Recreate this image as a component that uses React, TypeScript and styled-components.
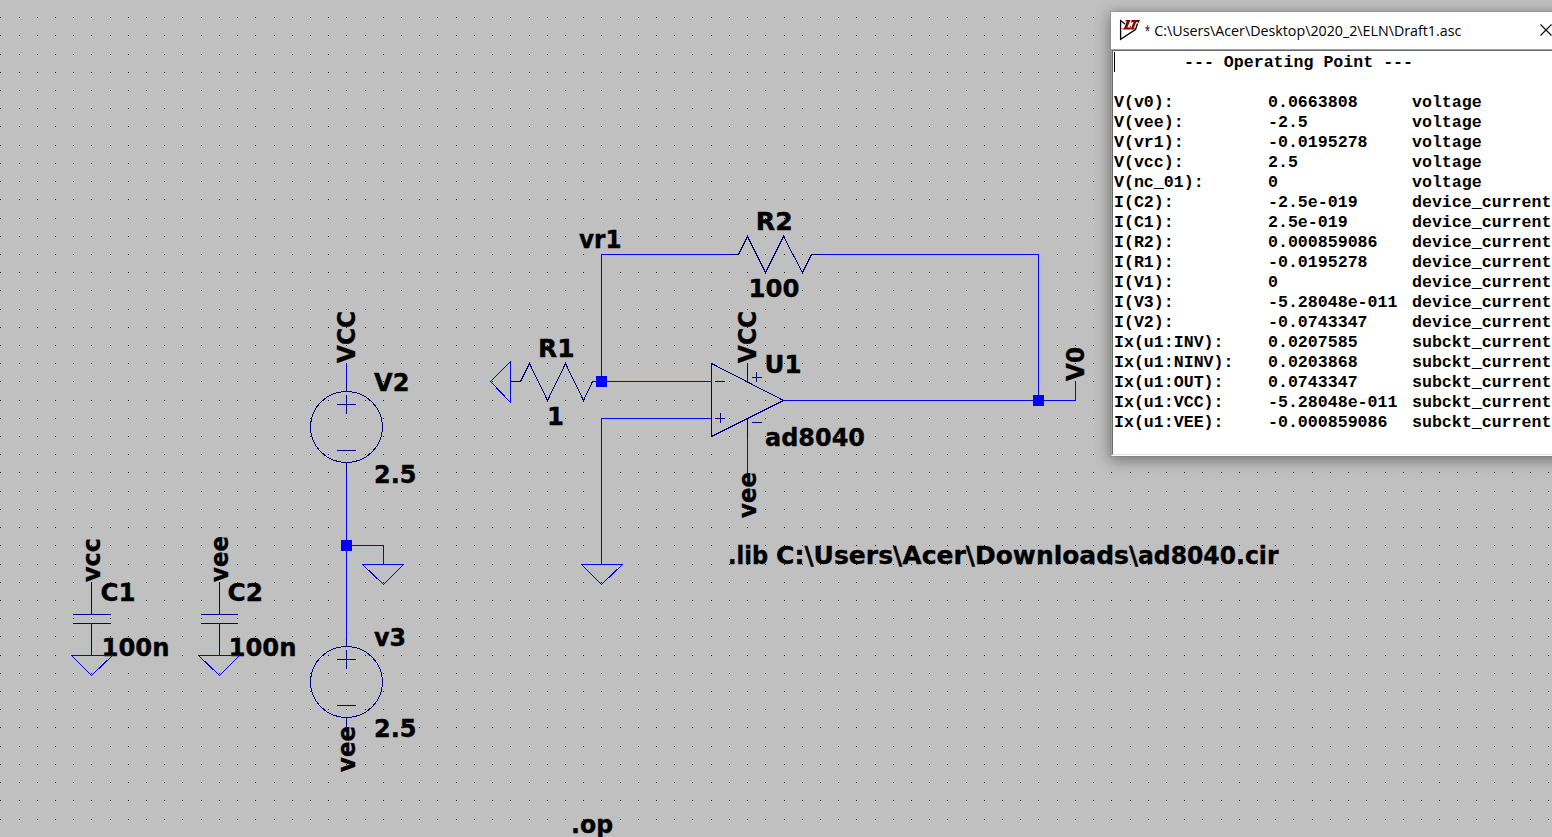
import React from "react";
import styled, { createGlobalStyle } from "styled-components";

const GlobalStyle = createGlobalStyle`
  html, body { margin: 0; padding: 0; overflow: hidden; background: #c0c0c0; }
`;

const Workspace = styled.main`
  position: relative;
  width: 1552px;
  height: 837px;
  overflow: hidden;
  background: #c0c0c0;
`;

const Sheet = styled.svg`
  display: block;
  width: 1552px;
  height: 837px;
`;

const Stroke = styled.path<{ $tone: "wire" | "symbol" }>`
  fill: none;
  stroke: ${(p) => (p.$tone === "wire" ? "#0000ff" : "#000080")};
  stroke-width: 1;
  shape-rendering: crispEdges;
`;

const Ring = styled.ellipse`
  fill: none;
  stroke: #000080;
  stroke-width: 1;
  shape-rendering: crispEdges;
`;

const Junction = styled.rect`
  fill: #0000ff;
  shape-rendering: crispEdges;
`;

const Dots = styled.path`
  fill: #000;
  shape-rendering: crispEdges;
`;

const Label = styled.text`
  font: bold 25.5px "DejaVu Sans Condensed", "DejaVu Sans", sans-serif;
  font-stretch: condensed;
  fill: #000;
  stroke: #000;
  stroke-width: 0.35;
  white-space: pre;
`;

const ResultWindow = styled.section`
  position: absolute;
  left: 1111px;
  top: 12px;
  width: 460px;
  height: 444px;
  box-sizing: border-box;
  display: flex;
  flex-direction: column;
  background: #fff;
  box-shadow: 0 0 0 1px rgba(120, 120, 120, 0.25), 0 3px 14px 1px rgba(0, 0, 0, 0.42);
`;

const TitleBar = styled.header`
  display: flex;
  align-items: center;
  height: 37px;
  flex: none;
  padding-left: 8px;
  box-sizing: border-box;
  background: #fff;
`;

const AppIcon = styled.svg`
  width: 22px;
  height: 22px;
  flex: none;
  margin-top: -1px;
`;

const Title = styled.h1`
  margin: 1px 0 0 4px;
  width: 394px;
  flex: none;
  font: 400 15px "Open Sans", "Noto Sans", sans-serif;
  color: #000;
`;

const TitleText = styled.svg`
  display: block;
  width: 330px;
  height: 24px;
`;

const TitleGlyphs = styled.text`
  font: 400 15.2px "Open Sans", "Noto Sans", sans-serif;
  fill: #000;
`;

const CloseIcon = styled.svg`
  width: 14px;
  height: 14px;
  flex: none;
  margin-top: -2px;
`;

const Report = styled.div`
  flex: 1;
  box-sizing: border-box;
  border-left: 1px solid #a0a0a0;
  border-top: 1px solid #a0a0a0;
  border-bottom: 1px solid #fff;
  display: flex;
`;

const ReportBody = styled.div`
  flex: 1;
  box-sizing: border-box;
  border-left: 1px solid #696969;
  border-top: 1px solid #696969;
  border-bottom: 1px solid #e3e3e3;
  padding: 2px 0 0 1px;
  font: bold 16.6px/20px "Liberation Mono", monospace;
  color: #000;
  white-space: pre;
`;

const Heading = styled.div`
  display: flex;
  height: 40px;
`;

const Caret = styled.span`
  width: 1px;
  height: 20px;
  margin: -1px 69px 0 0;
  background: #000;
`;

const Row = styled.div`
  display: grid;
  grid-template-columns: 154px 144px 150px;
  height: 20px;
`;

const PITCH = 18.2128;
const gridPath = (() => {
  let d = "";
  for (let j = 0; j < 45; j++) {
    const y = Math.floor(PITCH * j + 17.66);
    for (let i = 0; i < 86; i++) {
      d += `M${Math.floor(PITCH * i + 0.85)} ${y}h1v1h-1z`;
    }
  }
  return d;
})();

type LabelSpec = { text: string; x: number; y: number; len: number; up?: boolean };

const labels: LabelSpec[] = [
  { text: "vr1", x: 579, y: 248.4, len: 42.5 },
  { text: "R2", x: 755.8, y: 230.4, len: 37 },
  { text: "100", x: 748.5, y: 297.4, len: 51 },
  { text: "R1", x: 538, y: 357.4, len: 36.5 },
  { text: "1", x: 547, y: 425.4, len: 17 },
  { text: "U1", x: 764.5, y: 373.4, len: 37 },
  { text: "ad8040", x: 765, y: 446.4, len: 100 },
  { text: "V2", x: 374, y: 391.4, len: 35.5 },
  { text: "2.5", x: 374, y: 483.4, len: 42.5 },
  { text: "v3", x: 374, y: 646.4, len: 32 },
  { text: "2.5", x: 374, y: 737.4, len: 42.5 },
  { text: "C1", x: 100.5, y: 601.4, len: 35 },
  { text: "100n", x: 101.5, y: 656.4, len: 68 },
  { text: "C2", x: 227.5, y: 601.4, len: 35.5 },
  { text: "100n", x: 228.5, y: 656.4, len: 68 },
  { text: ".lib ", x: 728, y: 564.4, len: 48 },
  { text: "C:\\Users\\Acer\\", x: 776, y: 564.4, len: 199 },
  { text: "Downloads\\", x: 975, y: 564.4, len: 163 },
  { text: "ad8040.cir", x: 1138, y: 564.4, len: 140.5 },
  { text: ".op", x: 571, y: 833.4, len: 42 },
  { text: "VCC", x: 354.5, y: 363, len: 52, up: true },
  { text: "VCC", x: 755.5, y: 363, len: 52, up: true },
  { text: "vee", x: 756, y: 518, len: 46, up: true },
  { text: "vee", x: 355, y: 772, len: 46, up: true },
  { text: "vcc", x: 100, y: 582, len: 44, up: true },
  { text: "vee", x: 228, y: 582, len: 46, up: true },
  { text: "V0", x: 1083.5, y: 381, len: 34, up: true },
];

const wires = [
  "M601 381V254H730",
  "M820 254H1038V400",
  "M601 381H711",
  "M711 418H601V564",
  "M783 400H1075V380.5",
  "M747 436V473",
  "M346 363V382",
  "M346 472V637",
  "M346 545H383V564",
  "M510 361V402.5M510 361L490 381L510 402",
  "M581 564H622.5M581 564L601 584L622 564",
  "M362 564H403.5M362 564L383 584L403 564",
  "M71 655H112.5M71 655L91 675L112 655",
  "M198 655H239.5M198 655L219 675L239 655",
];

const symbols = [
  "M729 254H738L747 236L765 272L783 236L802 272L811 254H820.5",
  "M510 381H520L529 363L547 400L565 363L583 400L592 381H601",
  "M711 363V436L783 400Z",
  "M714.5 381H724.5M714.5 418H724.5M720 412.5V422.5",
  "M747 363V381M747 418V437M751.5 377H761.5M756 371.5V381.5M751.5 422H761.5",
  "M346 382V391M336.5 404H355.5M346 394.5V413.5M336.5 450H355.5M346 462V472",
  "M346 637V646M336.5 659H355.5M346 649.5V668.5M336.5 705H355.5M346 717V727",
  "M91 582V614M72.5 614H110.5M72.5 623H110.5M91 623V655",
  "M219 582V614M200.5 614H237.5M200.5 623H237.5M219 623V655",
];

const junctions: [number, number][] = [
  [596, 376],
  [1033, 395],
  [341, 540],
];

const results: [string, string, string][] = [
  ["V(v0):", "0.0663808", "voltage"],
  ["V(vee):", "-2.5", "voltage"],
  ["V(vr1):", "-0.0195278", "voltage"],
  ["V(vcc):", "2.5", "voltage"],
  ["V(nc_01):", "0", "voltage"],
  ["I(C2):", "-2.5e-019", "device_current"],
  ["I(C1):", "2.5e-019", "device_current"],
  ["I(R2):", "0.000859086", "device_current"],
  ["I(R1):", "-0.0195278", "device_current"],
  ["I(V1):", "0", "device_current"],
  ["I(V3):", "-5.28048e-011", "device_current"],
  ["I(V2):", "-0.0743347", "device_current"],
  ["Ix(u1:INV):", "0.0207585", "subckt_current"],
  ["Ix(u1:NINV):", "0.0203868", "subckt_current"],
  ["Ix(u1:OUT):", "0.0743347", "subckt_current"],
  ["Ix(u1:VCC):", "-5.28048e-011", "subckt_current"],
  ["Ix(u1:VEE):", "-0.000859086", "subckt_current"],
];

function Schematic() {
  return (
    <Sheet viewBox="0 0 1552 837">
      <Dots d={gridPath} />
      {labels.map((l, i) => (
        <Label
          key={i}
          textLength={l.len}
          lengthAdjust="spacingAndGlyphs"
          transform={`translate(${l.x} ${l.y})${l.up ? " rotate(-90)" : ""}`}
        >
          {l.text}
        </Label>
      ))}
      <g transform="translate(0.5 0.5)">
        {wires.map((d) => (
          <Stroke key={d} $tone="wire" d={d} />
        ))}
        {symbols.map((d) => (
          <Stroke key={d} $tone="symbol" d={d} />
        ))}
        <Ring cx={346} cy={426.5} rx={36} ry={35.5} />
        <Ring cx={346} cy={681.5} rx={36} ry={35.5} />
      </g>
      {junctions.map(([x, y]) => (
        <Junction key={x} x={x} y={y} width={11} height={11} />
      ))}
    </Sheet>
  );
}

export default function App() {
  return (
    <Workspace>
      <GlobalStyle />
      <Schematic />
      <ResultWindow>
        <TitleBar>
          <AppIcon viewBox="0 0 22 22">
            <path d="M6 5L1.6 1.5V20.3L16.5 10.5L18.5 4.5" fill="none" stroke="#000" strokeWidth="1.3" />
            <path d="M6.5 1H11.5L8.3 8.6H10.5L11.5 6.5L12 7L11.2 10.5H3.5V9.6H5L7.8 2.2H6.5Z" fill="#800000" />
            <path d="M12.5 1H21L19.5 4.2H18.8V3H17.2L14.6 9.4H16V10.5H10.8V9.4H12L14.5 3H13L12 4.5Z" fill="#800000" />
          </AppIcon>
          <Title>
            <TitleText>
              <TitleGlyphs x="0" y="17" textLength="5" lengthAdjust="spacingAndGlyphs">*</TitleGlyphs>
              <TitleGlyphs x="9.3" y="17" textLength="307" lengthAdjust="spacingAndGlyphs">
                {"C:\\Users\\Acer\\Desktop\\2020_2\\ELN\\Draft1.asc"}
              </TitleGlyphs>
            </TitleText>
          </Title>
          <CloseIcon viewBox="0 0 14 14">
            <path d="M1.5 1.5L12.5 12.5M12.5 1.5L1.5 12.5" stroke="#000" strokeWidth="1.1" fill="none" />
          </CloseIcon>
        </TitleBar>
        <Report>
          <ReportBody>
            <Heading>
              <Caret />
              --- Operating Point ---
            </Heading>
            {results.map(([name, value, kind]) => (
              <Row key={name}>
                <span>{name}</span>
                <span>{value}</span>
                <span>{kind}</span>
              </Row>
            ))}
          </ReportBody>
        </Report>
      </ResultWindow>
    </Workspace>
  );
}
